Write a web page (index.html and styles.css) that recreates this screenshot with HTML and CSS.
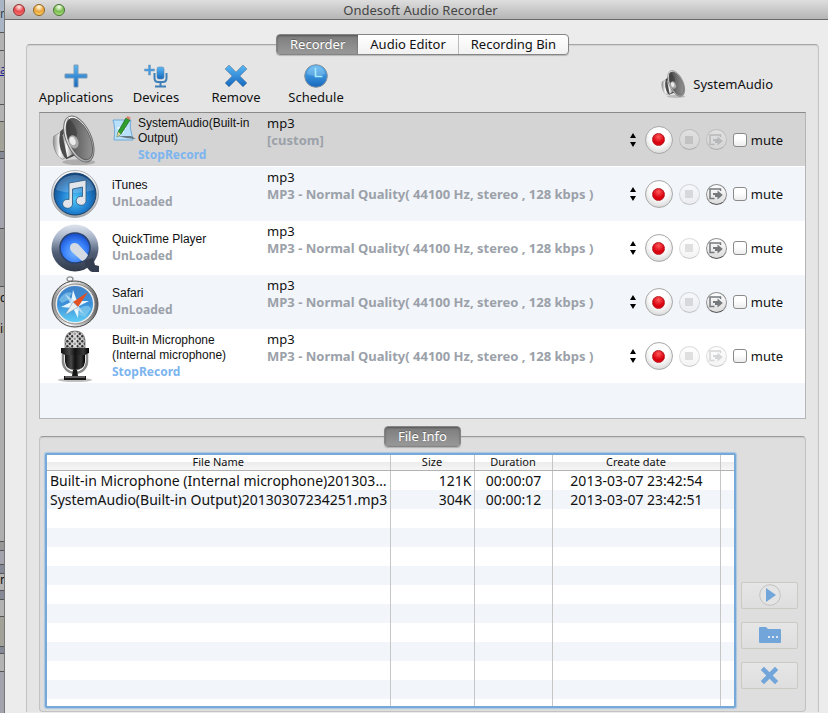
FILE: index.html
```html
<!DOCTYPE html>
<html lang="en">
<head>
  <meta charset="UTF-8" />
  <title>Ondesoft Audio Recorder</title>
  <link rel="stylesheet" href="styles.css">
</head>
<body>
  <!-- shared icons -->
  <svg class="defs" aria-hidden="true">
    <defs>
      <linearGradient id="blue" x1="0" y1="0" x2="0" y2="1">
        <stop offset="0" stop-color="#5ab8f5"/><stop offset="1" stop-color="#1467bd"/>
      </linearGradient>
      <linearGradient id="metal" x1="0" y1="0" x2="1" y2="0">
        <stop offset="0" stop-color="#8c8c8c"/><stop offset=".35" stop-color="#fafafa"/><stop offset=".7" stop-color="#b5b5b5"/><stop offset="1" stop-color="#5d5d5d"/>
      </linearGradient>
      <linearGradient id="cone" x1="0" y1="0" x2="1" y2="1">
        <stop offset="0" stop-color="#3c3c3c"/><stop offset=".5" stop-color="#6d6d6d"/><stop offset="1" stop-color="#a2a2a2"/>
      </linearGradient>
      <linearGradient id="silver" x1="0" y1="0" x2="0" y2="1">
        <stop offset="0" stop-color="#fdfdfd"/><stop offset="1" stop-color="#a4a6aa"/>
      </linearGradient>
      <radialGradient id="itunes" cx=".5" cy=".62" r=".6">
        <stop offset="0" stop-color="#4fc9f8"/><stop offset=".55" stop-color="#1f7fd0"/><stop offset="1" stop-color="#12467f"/>
      </radialGradient>
      <linearGradient id="qring" x1="0" y1="0" x2="0" y2="1">
        <stop offset="0" stop-color="#dfe5ee"/><stop offset=".3" stop-color="#a2afc4"/><stop offset=".6" stop-color="#515f77"/><stop offset="1" stop-color="#303a4b"/>
      </linearGradient>
      <radialGradient id="qface" cx=".5" cy=".65" r=".6">
        <stop offset="0" stop-color="#79b7ff"/><stop offset=".6" stop-color="#3b83fb"/><stop offset="1" stop-color="#1b53cf"/>
      </radialGradient>
      <linearGradient id="sky" x1="0" y1="0" x2="0" y2="1">
        <stop offset="0" stop-color="#3f82c8"/><stop offset=".5" stop-color="#3b90d8"/><stop offset="1" stop-color="#5fcdf5"/>
      </linearGradient>
      <linearGradient id="black" x1="0" y1="0" x2="1" y2="0">
        <stop offset="0" stop-color="#111"/><stop offset=".3" stop-color="#4a4a4a"/><stop offset=".5" stop-color="#111"/><stop offset=".8" stop-color="#3a3a3a"/><stop offset="1" stop-color="#000"/>
      </linearGradient>
      <pattern id="mesh" width="5" height="5" patternUnits="userSpaceOnUse">
        <rect width="5" height="5" fill="#c9c9c9"/><circle cx="1.3" cy="1.3" r="1.2" fill="#333"/><circle cx="3.8" cy="3.8" r="1.2" fill="#333"/>
      </pattern>
    </defs>
    <symbol id="speaker" viewBox="0 0 48 54">
      <ellipse cx="28" cy="50" rx="17" ry="3" fill="#000" opacity=".18"/>
      <path d="M2 23 L11 18 L20 42 L11 47 C3 43 0 31 2 23Z" fill="url(#metal)" stroke="#777" stroke-width=".6"/>
      <path d="M9 18 L16 11 L24 43 L15 47 C8 40 6 27 9 18Z" fill="#4b4b4b"/>
      <path d="M11 22 L17 13 L23 41 L16 45Z" fill="url(#metal)"/>
      <ellipse cx="28" cy="26" rx="13" ry="25.500" transform="rotate(-24 28 26)" fill="url(#silver)" stroke="#6b6b6b" stroke-width="1"/>
      <ellipse cx="28.500" cy="26" rx="11" ry="23" transform="rotate(-24 28.500 26)" fill="url(#cone)" stroke="#555" stroke-width=".8"/>
      <path d="M17 4 C25 12 28 20 25 24 L17 27 C15 20 13 9 17 4Z" fill="#2e2e2e" opacity=".45"/>
      <ellipse cx="22.500" cy="29" rx="5" ry="7" transform="rotate(-20 22.500 29)" fill="#a9a9a9"/>
      <ellipse cx="21.500" cy="28" rx="3" ry="4.500" transform="rotate(-20 21.500 28)" fill="#ececec"/>
    </symbol>
    <symbol id="share" viewBox="0 0 14 12">
      <path d="M11.500 3 V1 H1 V10.500 H5.500" fill="none" stroke="currentColor" stroke-width="1.500"/>
      <path d="M4 5 H8.500 V2.500 L13.800 7 L8.500 11.500 V9 H6 V7 H4Z" fill="currentColor"/>
    </symbol>
    <symbol id="cross" viewBox="0 0 24 24">
      <path d="M5 1 L12 8 L19 1 L23 5 L16 12 L23 19 L19 23 L12 16 L5 23 L1 19 L8 12 L1 5Z"/>
    </symbol>
  </svg>

  <div class="backdrop" aria-hidden="true">
    <div class="strip steel h33"><span>m</span></div>
    <div class="strip pale h18"></div>
    <div class="strip pale link h54"><span>a</span></div>
    <div class="strip pale h17"></div>
    <div class="strip khaki h30"></div>
    <div class="strip slate h7"></div>
    <div class="strip lilac h70"></div>
    <div class="strip gray h58"></div>
    <div class="strip ash tall"><span>c</span><span>in</span></div>
    <div class="strip gray h9"></div>
    <div class="strip lilac h14"></div>
    <div class="strip slate h9"></div>
    <div class="strip pale h17"><span>ni</span></div>
    <div class="strip slate h9"></div>
    <div class="strip pale h17"></div>
    <div class="strip khaki h30"></div>
    <div class="strip slate h7"></div>
    <div class="strip pale h18"></div>
    <div class="strip lilac rest"></div>
  </div>

  <div class="window">
    <header class="titlebar">
      <div class="lights">
        <button class="light red" aria-label="Close"></button>
        <button class="light yellow" aria-label="Minimize"></button>
        <button class="light green" aria-label="Zoom"></button>
      </div>
      <h1>Ondesoft Audio Recorder</h1>
    </header>

    <main>
      <nav class="tabs">
        <button class="tab active">Recorder</button>
        <button class="tab">Audio Editor</button>
        <button class="tab">Recording Bin</button>
      </nav>

      <section class="panel">
        <div class="toolbar">
          <button class="tool">
            <svg width="24" height="24" viewBox="0 0 24 24"><path d="M10 1 H14 V10 H23 V14 H14 V23 H10 V14 H1 V10 H10Z" fill="url(#blue)" stroke="#7f9bb5"/></svg>
            Applications
          </button>
          <button class="tool">
            <svg width="24" height="24" viewBox="0 0 24 24">
              <path d="M4.500 1 H6.500 V5 H10.500 V7 H6.500 V11 H4.500 V7 H.500 V5 H4.500Z" fill="#3c9be8" stroke="#7f9bb5" stroke-width=".6"/>
              <rect x="13" y="3" width="7" height="12" rx="2" fill="url(#blue)" stroke="#5c88b0" stroke-width=".6"/>
              <path d="M10.500 9 V14 Q10.500 18 14 18 H19 Q22.500 18 22.500 14 V9 M16.500 18 V22 M11 22.500 H22" fill="none" stroke="#3f80b8" stroke-width="2"/>
            </svg>
            Devices
          </button>
          <button class="tool">
            <svg width="24" height="24" fill="url(#blue)" stroke="#7f9bb5"><use href="#cross"/></svg>
            Remove
          </button>
          <button class="tool">
            <svg width="24" height="24" viewBox="0 0 24 24"><circle cx="12" cy="12" r="11.300" fill="url(#blue)" stroke="#86919b"/><path d="M3 10 Q5 2 12 2 T21 10 Q12 14 3 10Z" fill="#fff" opacity=".2"/><path d="M11.500 4 V12.500 H18.500" fill="none" stroke="#a6ecff" stroke-width="1.600"/></svg>
            Schedule
          </button>
          <div class="source">
            <svg width="26" height="30"><use href="#speaker"/></svg>
            SystemAudio
          </div>
        </div>

        <ul class="sources">
          <li class="row selected">
            <svg class="app" width="48" height="52"><use href="#speaker"/></svg>
            <div class="name">
              <svg class="edit" width="24" height="26" viewBox="0 0 24 26">
                <path d="M1 4 H19 C17 11 20 18 21 24 H2 C3 17 3 10 1 4Z" fill="#b9e0fa" stroke="#6fa9d6"/>
                <path d="M5 12 H14 M5 16 H12" stroke="#e3f4ff" stroke-width="2"/>
                <path d="M6 20 L14 22 L24 23 L19 20Z" fill="#333" opacity=".6"/>
                <path d="M5 21 L6 16 L14 2 L18 4 L9 18Z" fill="#2f9e2d" stroke="#14611a" stroke-width=".7"/>
                <path d="M5 21 L6 16 L9 18Z" fill="#edd6a0"/>
                <path d="M14 2 L15.500 0 L18.500 1.500 L18 4Z" fill="#d9826d"/>
              </svg>
              <div>SystemAudio(Built-in Output)<b class="live">StopRecord</b></div>
            </div>
            <div class="format">mp3<b>[custom]</b></div>
            <div class="controls">
              <svg class="stepper" width="6" height="14" viewBox="0 0 6 14"><path d="M3 0 L6 5 H0Z M0 9 H6 L3 14Z"/></svg>
              <button class="rec" aria-label="Record"><i></i></button>
              <button class="mini" aria-label="Stop" disabled><i></i></button>
              <button class="mini" aria-label="Export" disabled><svg width="14" height="12"><use href="#share"/></svg></button>
              <label><input type="checkbox">mute</label>
            </div>
          </li>
          <li class="row">
            <svg class="app" width="48" height="48" viewBox="0 0 48 48">
              <circle cx="24" cy="24" r="23.500" fill="url(#silver)" stroke="#9b9fa5" stroke-width=".8"/>
              <circle cx="24" cy="24" r="21" fill="url(#itunes)" stroke="#1b3f66"/>
              <path d="M5 20 C8 0 40 0 43 20 Q24 26 5 20Z" fill="#fff" opacity=".2"/>
              <path d="M18 13 L35 10 V30 A5 4.500 0 1 1 31.500 26.500 V17 L21.500 19 V33 A5 4.500 0 1 1 18 29.500Z" fill="#e2e6ea" stroke="#29547e" stroke-width=".8"/>
            </svg>
            <div class="name"><div>iTunes<b>UnLoaded</b></div></div>
            <div class="format">mp3<b>MP3 - Normal Quality( 44100 Hz, stereo , 128 kbps )</b></div>
            <div class="controls">
              <svg class="stepper" width="6" height="14" viewBox="0 0 6 14"><path d="M3 0 L6 5 H0Z M0 9 H6 L3 14Z"/></svg>
              <button class="rec" aria-label="Record"><i></i></button>
              <button class="mini" aria-label="Stop" disabled><i></i></button>
              <button class="mini" aria-label="Export"><svg width="14" height="12"><use href="#share"/></svg></button>
              <label><input type="checkbox">mute</label>
            </div>
          </li>
          <li class="row">
            <svg class="app" width="48" height="48" viewBox="0 0 48 48">
              <circle cx="24" cy="24" r="23.500" fill="url(#qring)"/>
              <path d="M33 37 L42 34 L44 41 L48 42 V48 H41 Q36 46 33 37Z" fill="#343e50"/>
              <circle cx="24" cy="24" r="15" fill="url(#qface)" stroke="#29426f" stroke-width="1.500"/>
              <path d="M19 24 Q19 19 24 19 L27 20 L37 31 Q35 36 31 37 L21 28 Q19 26 19 24Z" fill="#d5dbe3"/>
            </svg>
            <div class="name"><div>QuickTime Player<b>UnLoaded</b></div></div>
            <div class="format">mp3<b>MP3 - Normal Quality( 44100 Hz, stereo , 128 kbps )</b></div>
            <div class="controls">
              <svg class="stepper" width="6" height="14" viewBox="0 0 6 14"><path d="M3 0 L6 5 H0Z M0 9 H6 L3 14Z"/></svg>
              <button class="rec" aria-label="Record"><i></i></button>
              <button class="mini" aria-label="Stop" disabled><i></i></button>
              <button class="mini" aria-label="Export"><svg width="14" height="12"><use href="#share"/></svg></button>
              <label><input type="checkbox">mute</label>
            </div>
          </li>
          <li class="row">
            <svg class="app" width="48" height="52" viewBox="0 0 48 52">
              <ellipse cx="19" cy="3" rx="3" ry="2.200" fill="none" stroke="#8d8d8d" stroke-width="1.300"/>
              <circle cx="24" cy="28" r="23" fill="url(#metal)" stroke="#4b4b4b"/>
              <circle cx="24" cy="28" r="20" fill="#e9e9e9" stroke="#777" stroke-width=".8"/>
              <circle cx="24" cy="28" r="18" fill="url(#sky)"/>
              <path d="M8 24 Q14 14 21 17 L17 24 L11 27Z M29 32 Q38 27 40 33 L34 41 L28 39Z" fill="#8fd0f0" opacity=".6"/>
              <path d="M22 14 L26 25 L38 25 L28 30 L27 42 L22 32 L10 31 L20 26Z" fill="#e8f6ff"/>
              <path d="M14 18 L24 25 L33 38 L21 30Z" fill="#c3e4f7" opacity=".8"/>
              <path d="M37 16 L27 31 L22 26Z" fill="#e25023"/>
              <path d="M14 39 L22 26 L27 31Z" fill="#e8edf0" stroke="#6f97b8" stroke-width=".5"/>
            </svg>
            <div class="name"><div>Safari<b>UnLoaded</b></div></div>
            <div class="format">mp3<b>MP3 - Normal Quality( 44100 Hz, stereo , 128 kbps )</b></div>
            <div class="controls">
              <svg class="stepper" width="6" height="14" viewBox="0 0 6 14"><path d="M3 0 L6 5 H0Z M0 9 H6 L3 14Z"/></svg>
              <button class="rec" aria-label="Record"><i></i></button>
              <button class="mini" aria-label="Stop" disabled><i></i></button>
              <button class="mini" aria-label="Export"><svg width="14" height="12"><use href="#share"/></svg></button>
              <label><input type="checkbox">mute</label>
            </div>
          </li>
          <li class="row">
            <svg class="app" width="48" height="52" viewBox="0 0 48 52">
              <ellipse cx="24" cy="50" rx="17" ry="2" fill="#000" opacity=".25"/>
              <path d="M12 24 V32 Q13 42 24 43 Q35 42 36 32 V24" fill="none" stroke="#888" stroke-width="2.500"/>
              <path d="M22 40 H26 L27 46 H35 V50 H13 V46 H21Z" fill="#161616"/>
              <path d="M14 18 V10 Q15 1 24 1 T34 10 V18Z" fill="url(#mesh)" stroke="#777" stroke-width=".8"/>
              <rect x="22" y="2" width="4" height="16" fill="#f2f2f2" opacity=".5"/>
              <path d="M14 24 H34 V32 Q33 40 24 40 Q15 40 14 32Z" fill="url(#black)"/>
              <path d="M10 18 H38 V23 L34 25 H14 L10 23Z" fill="url(#black)"/>
              <path d="M14 47 H34" stroke="#aaa"/>
            </svg>
            <div class="name"><div>Built-in Microphone (Internal microphone)<b class="live">StopRecord</b></div></div>
            <div class="format">mp3<b>MP3 - Normal Quality( 44100 Hz, stereo , 128 kbps )</b></div>
            <div class="controls">
              <svg class="stepper" width="6" height="14" viewBox="0 0 6 14"><path d="M3 0 L6 5 H0Z M0 9 H6 L3 14Z"/></svg>
              <button class="rec" aria-label="Record"><i></i></button>
              <button class="mini" aria-label="Stop" disabled><i></i></button>
              <button class="mini" aria-label="Export" disabled><svg width="14" height="12"><use href="#share"/></svg></button>
              <label><input type="checkbox">mute</label>
            </div>
          </li>
        </ul>

        <nav class="tabs info">
          <button class="tab active">File Info</button>
        </nav>

        <section class="files">
          <div class="table-box">
            <table>
              <colgroup><col class="c-name"><col class="c-size"><col class="c-time"><col class="c-date"><col class="c-rest"></colgroup>
              <thead>
                <tr><th>File Name</th><th>Size</th><th>Duration</th><th>Create date</th><th></th></tr>
              </thead>
              <tbody>
                <tr><td>Built-in Microphone (Internal microphone)20130307234254.mp3</td><td class="num">121K</td><td class="mid">00:00:07</td><td class="mid">2013-03-07 23:42:54</td><td></td></tr>
                <tr><td>SystemAudio(Built-in Output)20130307234251.mp3</td><td class="num">304K</td><td class="mid">00:00:12</td><td class="mid">2013-03-07 23:42:51</td><td></td></tr>
                <tr><td></td><td></td><td></td><td></td><td></td></tr>
                <tr><td></td><td></td><td></td><td></td><td></td></tr>
                <tr><td></td><td></td><td></td><td></td><td></td></tr>
                <tr><td></td><td></td><td></td><td></td><td></td></tr>
                <tr><td></td><td></td><td></td><td></td><td></td></tr>
                <tr><td></td><td></td><td></td><td></td><td></td></tr>
                <tr><td></td><td></td><td></td><td></td><td></td></tr>
                <tr><td></td><td></td><td></td><td></td><td></td></tr>
                <tr><td></td><td></td><td></td><td></td><td></td></tr>
                <tr><td></td><td></td><td></td><td></td><td></td></tr>
                <tr class="last"><td></td><td></td><td></td><td></td><td></td></tr>
              </tbody>
            </table>
          </div>
          <div class="actions">
            <button aria-label="Play"><svg width="22" height="22" viewBox="0 0 22 22"><circle cx="11" cy="11" r="10.300" fill="#e4e4e4" stroke="#c2c2c2"/><path d="M7 4 L17 11 L7 18Z" fill="#72a5da"/></svg></button>
            <button aria-label="Show in folder"><svg width="22" height="18" viewBox="0 0 22 18"><path d="M0 2 Q0 1 1 1 H7 L9 3 H21 Q22 3 22 4 V16 Q22 17 21 17 H1 Q0 17 0 16Z" fill="#72a5da"/><path d="M9 10 H11 V12 H9Z M13 10 H15 V12 H13Z M17 10 H19 V12 H17Z" fill="#dbe7f3"/></svg></button>
            <button aria-label="Delete"><svg width="19" height="19" fill="#72a5da"><use href="#cross"/></svg></button>
          </div>
        </section>
      </section>
    </main>
  </div>
</body>
</html>
```
FILE: styles.css
```css
* {
  box-sizing: border-box;
}
body {
  margin: 0;
  display: flex;
  height: 100vh;
  overflow: hidden;
  font-family: "Noto Sans", "Open Sans", sans-serif;
  font-size: 13px;
  color: #111;
  background: #ececec;
}
button {
  font: inherit;
  color: inherit;
  padding: 0;
  border: 0;
  background: none;
}
.defs {
  position: absolute;
  width: 0;
  height: 0;
}

/* Desktop behind the window */
.backdrop {
  flex: 0 0 5px;
  display: flex;
  flex-direction: column;
  overflow: hidden;
  font-size: 12px;
  line-height: 12px;
  border-right: 1px solid #777;
}
.strip {
  flex: none;
  overflow: hidden;
  border-bottom: 1px solid #555;
}
.strip span { display: block; }
.steel { background: #a9b5c4; color: #345; padding-top: 8px; }
.pale { background: #b2b2b2; }
.link { color: #1c1c96; padding-top: 13px; text-decoration: underline; }
.khaki { background: #a3a298; }
.slate { background: #858a96; }
.lilac { background: #a3a3ad; }
.gray { background: #979797; }
.ash { background: #aeaeae; }
.h7 { height: 7px; }
.h9 { height: 9px; }
.h14 { height: 14px; }
.h17 { height: 17px; }
.h18 { height: 18px; }
.h30 { height: 30px; }
.h33 { height: 33px; }
.h54 { height: 54px; }
.h58 { height: 58px; }
.h70 { height: 70px; }
.tall { height: 255px; padding-top: 5px; }
.tall span { margin-bottom: 19px; }
.rest { flex: 1; border: 0; }

/* Window */
.window {
  flex: 1;
  min-width: 0;
}
.titlebar {
  display: grid;
  grid-template-columns: 70px 1fr 70px;
  align-items: center;
  height: 20px;
  padding-left: 8px;
  border-bottom: 1px solid #6a6a6a;
  background: linear-gradient(#dedede, #b5b5b5);
}
.titlebar h1 {
  margin: 0;
  font-size: 13px;
  line-height: 18px;
  font-weight: normal;
  text-align: center;
  color: #454545;
}
.lights {
  display: flex;
  gap: 8px;
}
.light {
  width: 12px;
  height: 12px;
  border-radius: 50%;
  border: 1px solid #777;
}
.red { background: radial-gradient(circle at 50% 20%, #fbd0cd 10%, #e8474a 50%, #ff8d88); border-color: #932d2d; }
.yellow { background: radial-gradient(circle at 50% 20%, #fff0cc 10%, #eaa137 50%, #ffe87a); border-color: #94641e; }
.green { background: radial-gradient(circle at 50% 20%, #e5f7d5 10%, #78ba4e 50%, #c5f39a); border-color: #44742e; }

main {
  padding: 14px 9px 0 21px;
}

/* Tabs sit on the top edge of the panel */
.tabs {
  position: relative;
  z-index: 1;
  display: flex;
  width: fit-content;
  margin: 0 auto -11px;
  border: 1px solid #858585;
  border-radius: 4px;
  background: linear-gradient(#fff, #f1f1f1);
  box-shadow: 0 1px 1px rgba(0,0,0,0.2);
}
.tab {
  height: 19px;
  padding: 0 12px;
  line-height: 19px;
}
.tab + .tab + .tab {
  border-left: 1px solid #bbb;
}
.tab.active {
  padding: 0 13px;
  color: #fff;
  border-radius: 3px 0 0 3px;
  background: linear-gradient(#7c7c7c, #999);
  box-shadow: inset 0 1px 2px #555;
  text-shadow: 0 -1px 0 #666;
}
.info {
  margin-top: 7px;
}
.info .tab {
  border-radius: 3px;
}

.panel {
  padding: 19px 12px 0;
  border: 1px solid #c3c3c3;
  border-top-color: #a5a5a5;
  border-bottom: 0;
  border-radius: 4px 4px 0 0;
  background: #e5e5e5;
  box-shadow: inset 0 1px 1px #d2d2d2;
}

/* Toolbar */
.toolbar {
  display: flex;
  height: 48px;
  margin-left: -3px;
}
.tool {
  width: 80px;
  display: flex;
  flex-direction: column;
  align-items: center;
  line-height: 18px;
}
.source {
  display: flex;
  align-items: center;
  gap: 6px;
  height: 40px;
  margin-left: auto;
  padding-right: 33px;
}

/* Source list */
.sources {
  list-style: none;
  margin: 0;
  padding: 0 0 35px;
  border: 1px solid #b5b5b5;
  border-top-color: #8a8a8a;
  background: #f2f5fa;
}
.row {
  display: flex;
  align-items: center;
  gap: 13px;
  height: 54px;
  padding: 0 22px 0 11px;
  background: #fff;
}
.row:nth-child(even) {
  background: #f2f5fa;
}
.row.selected {
  background: #d4d4d4;
  border-bottom: 1px solid #fff;
}
.app {
  flex: none;
}
.name {
  flex: 0 0 142px;
  display: flex;
  gap: 2px;
  font-family: "Liberation Sans", Arial, sans-serif;
  font-size: 12px;
  line-height: 15px;
}
.edit {
  flex: none;
}
.row b {
  display: block;
  font: bold 12px/17px "Noto Sans", "Open Sans", sans-serif;
  color: #9ba1a9;
}
.row b.live {
  color: #7cb4ef;
}
.format {
  flex: 1;
  align-self: flex-start;
  padding-top: 2px;
  line-height: 17px;
  white-space: nowrap;
}
.format b {
  font-size: 13px;
}
.controls {
  display: flex;
  align-items: center;
  gap: 6px;
}
.stepper {
  margin-right: 3px;
}
.rec {
  display: grid;
  place-items: center;
  width: 28px;
  height: 28px;
  border-radius: 50%;
  border: 1px solid #a9a9a9;
  background: radial-gradient(circle at 50% 35%, #fff 40%, #c9c9c9);
}
.rec i {
  width: 13px;
  height: 13px;
  border-radius: 50%;
  background: radial-gradient(circle at 50% 25%, #ff5a5a, #d9000f 60%);
  border: 1px solid #b81c22;
}
.mini {
  display: grid;
  place-items: center;
  width: 21px;
  height: 21px;
  border-radius: 50%;
  border: 1px solid #8f8f8f;
  border-bottom-color: #555;
  background: linear-gradient(#fff, #dcdcdc);
  color: #75797c;
}
.mini:disabled {
  opacity: 0.3;
}
.mini i {
  width: 8px;
  height: 8px;
  background: #999;
}
.controls label {
  display: flex;
  align-items: center;
  gap: 4px;
}
.controls input {
  appearance: none;
  width: 14px;
  height: 14px;
  margin: 0;
  border: 1px solid #8a8a8a;
  border-radius: 3px;
  background: linear-gradient(#fff 40%, #ececec);
}

/* Recorded files */
.files {
  display: flex;
  gap: 5px;
  padding: 16px 7px 3px 5px;
  border: 1px solid #c3c3c3;
  border-top-color: #9b9b9b;
  border-radius: 4px;
  background: #dedede;
  box-shadow: inset 0 1px 1px #cdcdcd;
}
.table-box {
  flex: 1;
  min-width: 0;
  border: 2px solid #77a9d8;
  border-radius: 2px;
  box-shadow: 0 0 1px 1px #a9c6e2;
  background: #fff;
}
table {
  width: 100%;
  table-layout: fixed;
  border-collapse: collapse;
}
.c-size { width: 84px; }
.c-time { width: 78px; }
.c-date { width: 168px; }
.c-rest { width: 14px; }
th {
  height: 15px;
  padding: 0;
  font-size: 11px;
  line-height: 14px;
  font-weight: normal;
  border-bottom: 1px solid #b2b2b2;
  border-right: 1px solid #c6c6c6;
  background: linear-gradient(#fff 45%, #ececec 50%, #f6f6f6);
}
td {
  height: 19px;
  padding: 0 2px 0 3px;
  font-size: 14px;
  line-height: 19px;
  white-space: nowrap;
  overflow: hidden;
  text-overflow: ellipsis;
  border-right: 1px solid #c6c6c6;
}
th:last-child, td:last-child {
  border-right: 0;
}
tbody tr:nth-child(even) {
  background: #f2f5fa;
}
.last td { height: 7px; }
.num { text-align: right; }
.mid { text-align: center; }

.actions {
  display: flex;
  flex-direction: column;
  justify-content: flex-end;
  gap: 13px;
  width: 57px;
  padding-bottom: 19px;
}
.actions button {
  display: grid;
  place-items: center;
  height: 27px;
  border: 1px solid #cbcbc3;
  border-radius: 2px;
  background: linear-gradient(#e6e6e6, #dedede);
}
```
